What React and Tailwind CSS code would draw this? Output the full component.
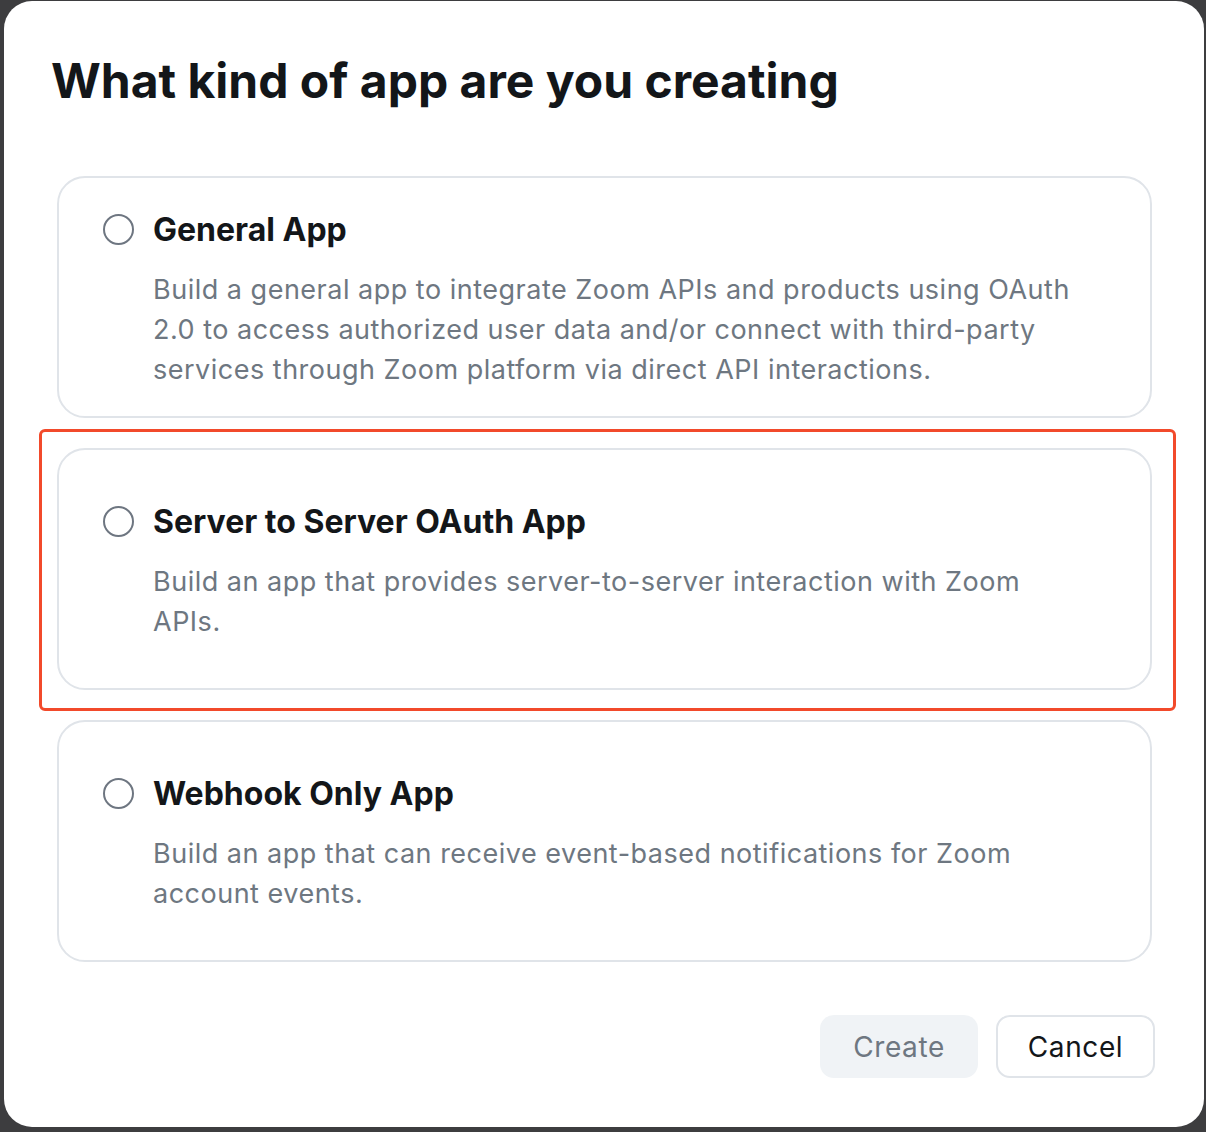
import React, { useState } from "react";

const options = [
  {
    id: "general",
    title: "General App",
    desc: "Build a general app to integrate Zoom APIs and products using OAuth 2.0 to access authorized user data and/or connect with third-party services through Zoom platform via direct API interactions.",
  },
  {
    id: "s2s",
    title: "Server to Server OAuth App",
    desc: "Build an app that provides server-to-server interaction with Zoom APIs.",
    highlight: true,
  },
  {
    id: "webhook",
    title: "Webhook Only App",
    desc: "Build an app that can receive event-based notifications for Zoom account events.",
  },
];

function OptionCard({ option, selected, onSelect }) {
  return (
    <div className="relative">
      {option.highlight && (
        <div className="pointer-events-none absolute -left-[18px] -right-[24px] -top-[19px] -bottom-[21px] rounded-[6px] border-[3px] border-[#f24a2b]" />
      )}
      <button
        type="button"
        onClick={() => onSelect(option.id)}
        className="flex h-[242px] w-full flex-col justify-center rounded-[28px] border-2 border-[#e0e4e9] bg-white pl-[44px] pr-[70px] pt-[5px] text-left"
      >
        <div className="flex items-center gap-[19px]">
          <span className="flex h-[31px] w-[31px] shrink-0 items-center justify-center rounded-full border-2 border-[#6e7681]">
            {selected && <span className="h-[15px] w-[15px] rounded-full bg-[#0b5cff]" />}
          </span>
          <span className="text-[32px] font-bold leading-[40px] text-[#131619]">
            {option.title}
          </span>
        </div>
        <p className="mt-[20px] pl-[50px] text-[27px] leading-[40px] tracking-[0.5px] text-[#6e7781]">
          {option.desc}
        </p>
      </button>
    </div>
  );
}

export default function App() {
  const [selected, setSelected] = useState(null);

  return (
    <div
      className="h-[1132px] w-[1206px] bg-[#3d3d3f] pl-[4px] pt-[1px]"
      style={{ fontFamily: "Inter, 'Noto Sans', sans-serif" }}
    >
      <div className="flex h-[1126px] w-[1200px] flex-col rounded-[28px] bg-white pl-[47px] pr-[49px] pt-[50px]">
        <h1 className="text-[48px] font-bold leading-[60px] text-[#131619]">
          What kind of app are you creating
        </h1>
        <div className="mt-[65px] flex flex-col gap-[30px] pl-[6px] pr-[3px]">
          {options.map((o) => (
            <OptionCard key={o.id} option={o} selected={selected === o.id} onSelect={setSelected} />
          ))}
        </div>
        <div className="mt-[53px] flex justify-end gap-[18px]">
          <button
            type="button"
            disabled={!selected}
            className="h-[63px] w-[158px] rounded-[14px] bg-[#f0f3f6] text-[28px] tracking-[0.6px] text-[#6e7781]"
          >
            Create
          </button>
          <button
            type="button"
            className="h-[63px] w-[159px] rounded-[14px] border-2 border-[#e0e4e9] bg-white text-[28px] tracking-[0.6px] text-[#131619]"
          >
            Cancel
          </button>
        </div>
      </div>
    </div>
  );
}
